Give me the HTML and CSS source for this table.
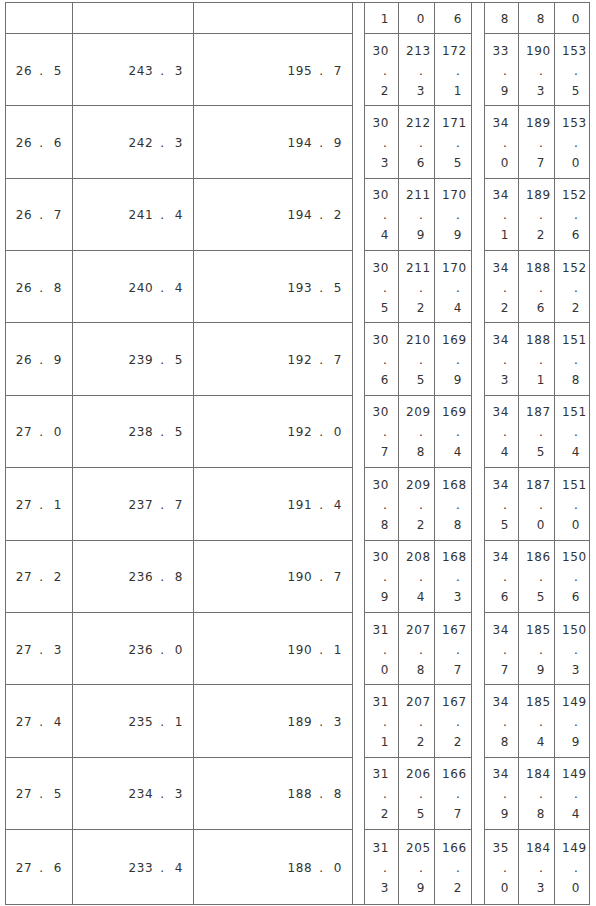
FILE: index.html
```html
<!DOCTYPE html>
<html lang="ko">
<head>
<meta charset="utf-8">
<title>표</title>
<link rel="stylesheet" href="styles.css">
</head>
<body>
<table class="grid">
  <colgroup>
    <col class="w1"><col class="w2"><col class="w3"><col class="ws1">
    <col class="wa"><col class="wb"><col class="wc"><col class="ws2">
    <col class="wa"><col class="wb"><col class="wd">
  </colgroup>
  <tbody>
    <tr class="head">
      <td></td><td></td><td></td>
      <td class="sp" rowspan="13"></td>
      <td class="n">1</td><td class="n">0</td><td class="n">6</td>
      <td class="sp" rowspan="13"></td>
      <td class="n">8</td><td class="n">8</td><td class="n">0</td>
    </tr>
    <tr class="row">
      <td>26<span class="pt">.</span>5</td><td>243<span class="pt">.</span>3</td><td>195<span class="pt">.</span>7</td>
      <td class="n">30<span class="pt">.</span>2</td><td class="n">213<span class="pt">.</span>3</td><td class="n">172<span class="pt">.</span>1</td>
      <td class="n">33<span class="pt">.</span>9</td><td class="n">190<span class="pt">.</span>3</td><td class="n">153<span class="pt">.</span>5</td>
    </tr>
    <tr class="row">
      <td>26<span class="pt">.</span>6</td><td>242<span class="pt">.</span>3</td><td>194<span class="pt">.</span>9</td>
      <td class="n">30<span class="pt">.</span>3</td><td class="n">212<span class="pt">.</span>6</td><td class="n">171<span class="pt">.</span>5</td>
      <td class="n">34<span class="pt">.</span>0</td><td class="n">189<span class="pt">.</span>7</td><td class="n">153<span class="pt">.</span>0</td>
    </tr>
    <tr class="row">
      <td>26<span class="pt">.</span>7</td><td>241<span class="pt">.</span>4</td><td>194<span class="pt">.</span>2</td>
      <td class="n">30<span class="pt">.</span>4</td><td class="n">211<span class="pt">.</span>9</td><td class="n">170<span class="pt">.</span>9</td>
      <td class="n">34<span class="pt">.</span>1</td><td class="n">189<span class="pt">.</span>2</td><td class="n">152<span class="pt">.</span>6</td>
    </tr>
    <tr class="row">
      <td>26<span class="pt">.</span>8</td><td>240<span class="pt">.</span>4</td><td>193<span class="pt">.</span>5</td>
      <td class="n">30<span class="pt">.</span>5</td><td class="n">211<span class="pt">.</span>2</td><td class="n">170<span class="pt">.</span>4</td>
      <td class="n">34<span class="pt">.</span>2</td><td class="n">188<span class="pt">.</span>6</td><td class="n">152<span class="pt">.</span>2</td>
    </tr>
    <tr class="row">
      <td>26<span class="pt">.</span>9</td><td>239<span class="pt">.</span>5</td><td>192<span class="pt">.</span>7</td>
      <td class="n">30<span class="pt">.</span>6</td><td class="n">210<span class="pt">.</span>5</td><td class="n">169<span class="pt">.</span>9</td>
      <td class="n">34<span class="pt">.</span>3</td><td class="n">188<span class="pt">.</span>1</td><td class="n">151<span class="pt">.</span>8</td>
    </tr>
    <tr class="row">
      <td>27<span class="pt">.</span>0</td><td>238<span class="pt">.</span>5</td><td>192<span class="pt">.</span>0</td>
      <td class="n">30<span class="pt">.</span>7</td><td class="n">209<span class="pt">.</span>8</td><td class="n">169<span class="pt">.</span>4</td>
      <td class="n">34<span class="pt">.</span>4</td><td class="n">187<span class="pt">.</span>5</td><td class="n">151<span class="pt">.</span>4</td>
    </tr>
    <tr class="row">
      <td>27<span class="pt">.</span>1</td><td>237<span class="pt">.</span>7</td><td>191<span class="pt">.</span>4</td>
      <td class="n">30<span class="pt">.</span>8</td><td class="n">209<span class="pt">.</span>2</td><td class="n">168<span class="pt">.</span>8</td>
      <td class="n">34<span class="pt">.</span>5</td><td class="n">187<span class="pt">.</span>0</td><td class="n">151<span class="pt">.</span>0</td>
    </tr>
    <tr class="row">
      <td>27<span class="pt">.</span>2</td><td>236<span class="pt">.</span>8</td><td>190<span class="pt">.</span>7</td>
      <td class="n">30<span class="pt">.</span>9</td><td class="n">208<span class="pt">.</span>4</td><td class="n">168<span class="pt">.</span>3</td>
      <td class="n">34<span class="pt">.</span>6</td><td class="n">186<span class="pt">.</span>5</td><td class="n">150<span class="pt">.</span>6</td>
    </tr>
    <tr class="row">
      <td>27<span class="pt">.</span>3</td><td>236<span class="pt">.</span>0</td><td>190<span class="pt">.</span>1</td>
      <td class="n">31<span class="pt">.</span>0</td><td class="n">207<span class="pt">.</span>8</td><td class="n">167<span class="pt">.</span>7</td>
      <td class="n">34<span class="pt">.</span>7</td><td class="n">185<span class="pt">.</span>9</td><td class="n">150<span class="pt">.</span>3</td>
    </tr>
    <tr class="row">
      <td>27<span class="pt">.</span>4</td><td>235<span class="pt">.</span>1</td><td>189<span class="pt">.</span>3</td>
      <td class="n">31<span class="pt">.</span>1</td><td class="n">207<span class="pt">.</span>2</td><td class="n">167<span class="pt">.</span>2</td>
      <td class="n">34<span class="pt">.</span>8</td><td class="n">185<span class="pt">.</span>4</td><td class="n">149<span class="pt">.</span>9</td>
    </tr>
    <tr class="row">
      <td>27<span class="pt">.</span>5</td><td>234<span class="pt">.</span>3</td><td>188<span class="pt">.</span>8</td>
      <td class="n">31<span class="pt">.</span>2</td><td class="n">206<span class="pt">.</span>5</td><td class="n">166<span class="pt">.</span>7</td>
      <td class="n">34<span class="pt">.</span>9</td><td class="n">184<span class="pt">.</span>8</td><td class="n">149<span class="pt">.</span>4</td>
    </tr>
    <tr class="row last">
      <td>27<span class="pt">.</span>6</td><td>233<span class="pt">.</span>4</td><td>188<span class="pt">.</span>0</td>
      <td class="n">31<span class="pt">.</span>3</td><td class="n">205<span class="pt">.</span>9</td><td class="n">166<span class="pt">.</span>2</td>
      <td class="n">35<span class="pt">.</span>0</td><td class="n">184<span class="pt">.</span>3</td><td class="n">149<span class="pt">.</span>0</td>
    </tr>
  </tbody>
</table>
</body>
</html>
```
FILE: styles.css
```css
html, body {
  margin: 0;
  padding: 0;
  background: #ffffff;
}

body {
  font-family: "DejaVu Sans", "Noto Sans CJK KR", sans-serif;
  font-size: 12px;
  color: #333333;
}

.grid {
  margin: 2px 0 0 5px;
  width: 585px;
  table-layout: fixed;
  border-collapse: collapse;
}

.w1 { width: 67px; }
.w2 { width: 121px; }
.w3 { width: 159px; }
.ws1 { width: 12px; }
.wa { width: 34px; }
.wb { width: 36px; }
.wc { width: 37px; }
.ws2 { width: 13px; }
.wd { width: 35px; }

.grid td {
  border: 1px solid #707070;
  padding: 6px 10px 4px 7px;
  line-height: 20px;
  text-align: right;
  vertical-align: middle;
  letter-spacing: 0.6px;
  white-space: nowrap;
}

.grid td.n {
  padding-right: 9px;
}

.grid td.sp {
  padding: 0;
}

.head {
  height: 31px;
}

.row {
  height: 72.36px;
}

.row.last {
  height: 75px;
}

.pt {
  margin: 0 10px 0 7px;
}

.grid td.n .pt {
  display: block;
  margin: 0 1.5px 0 0;
}
```
